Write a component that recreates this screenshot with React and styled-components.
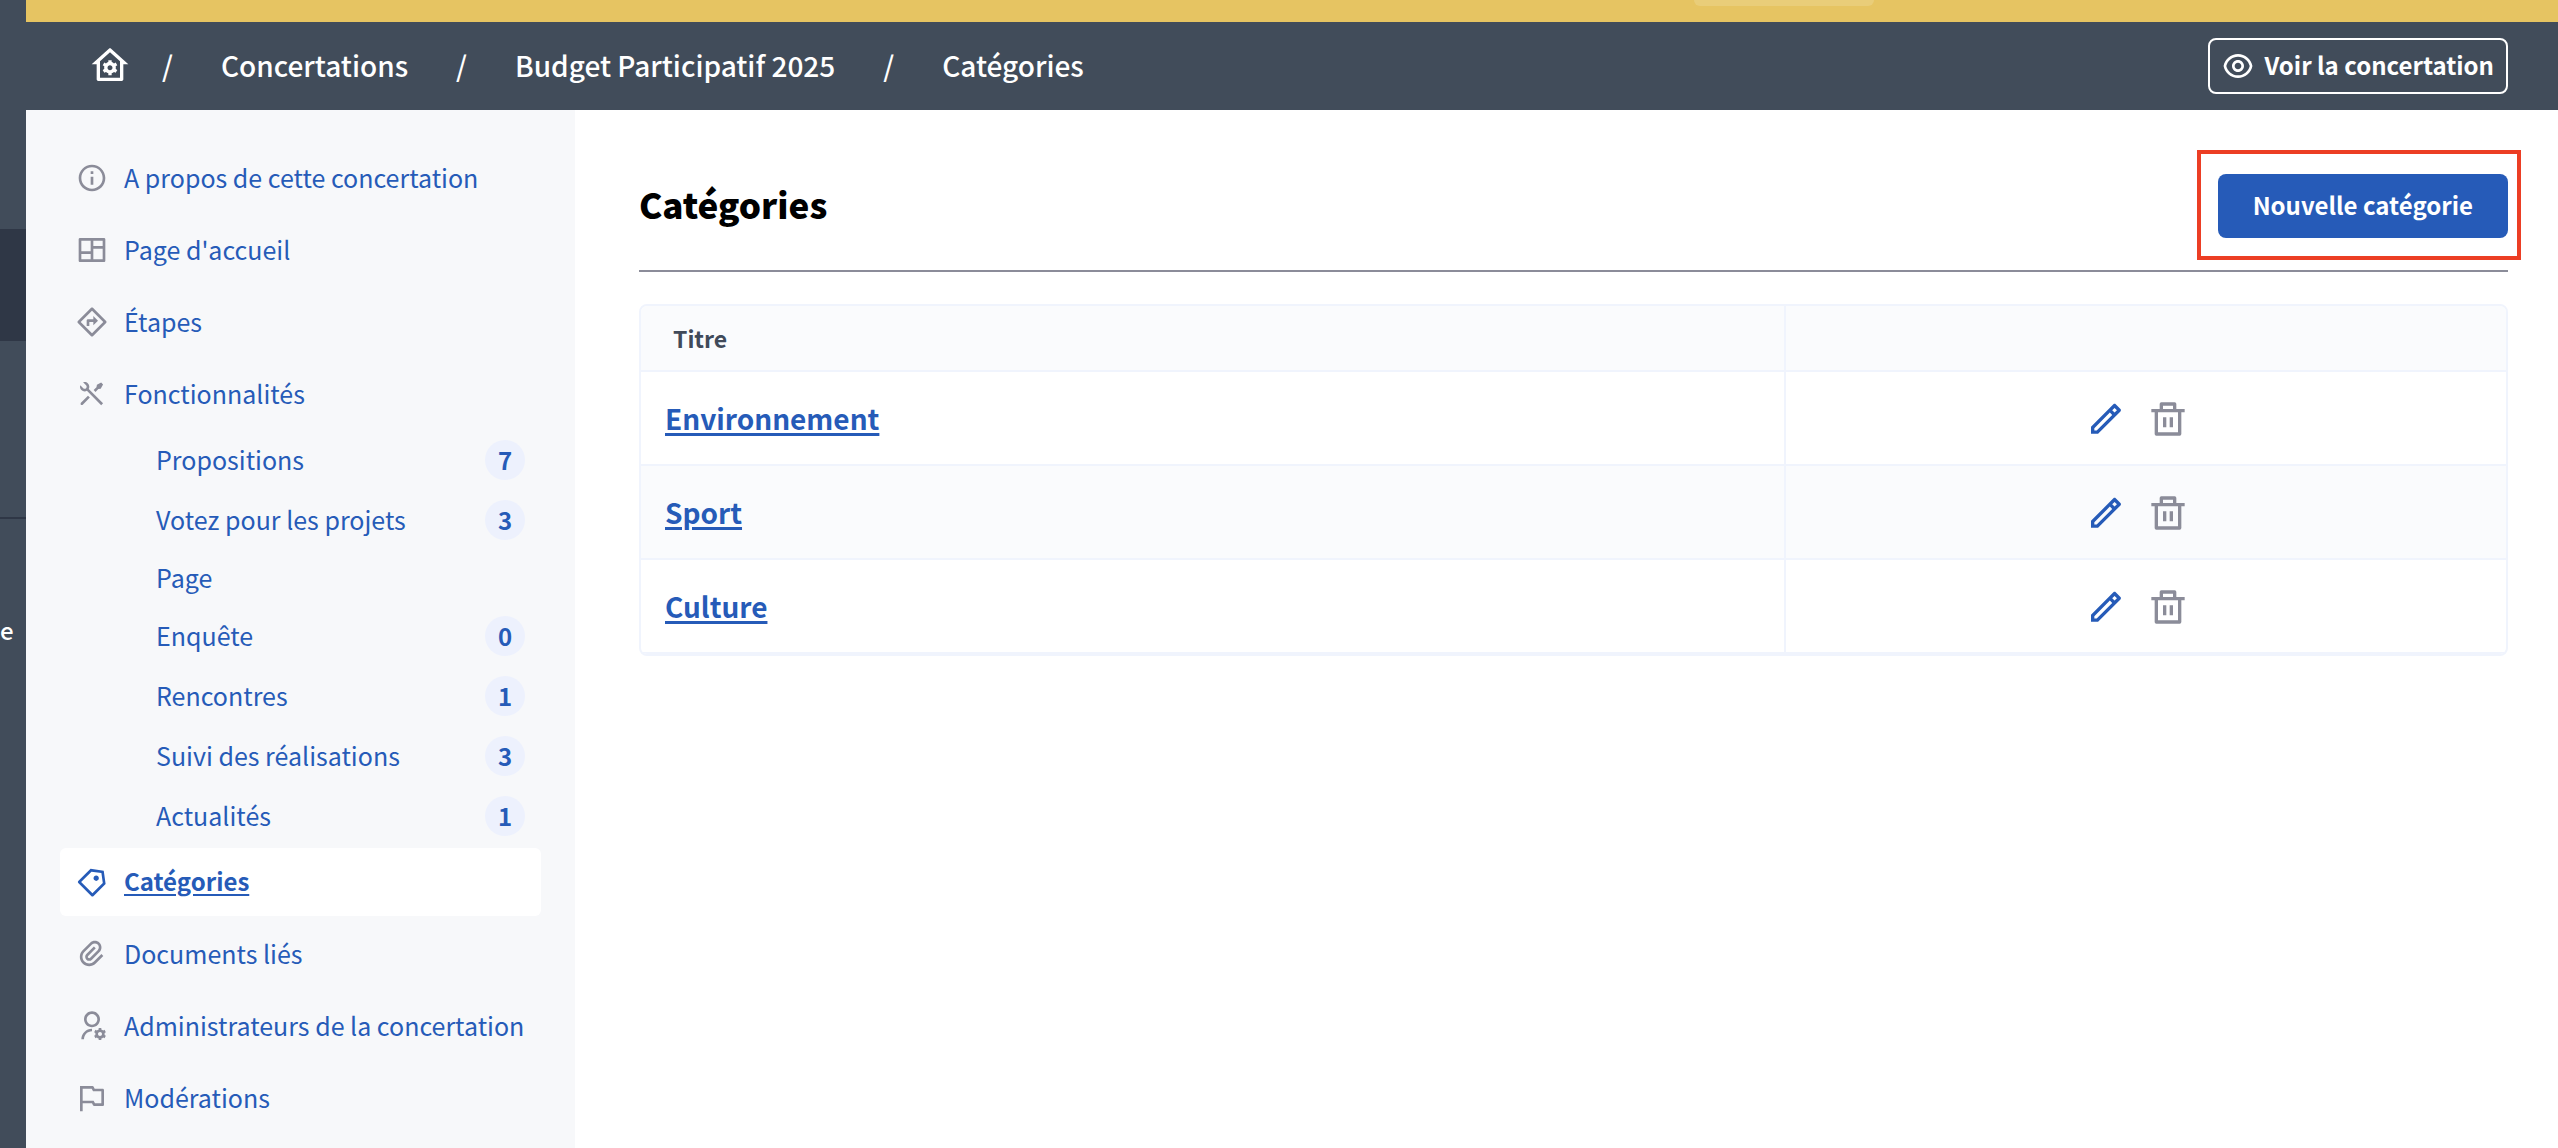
import React from "react";
import styled, { createGlobalStyle } from "styled-components";
import {
  RiHomeGearLine,
  RiEyeLine,
  RiInformationLine,
  RiLayoutMasonryLine,
  RiDirectionLine,
  RiToolsLine,
  RiPriceTag3Line,
  RiAttachment2,
  RiUserSettingsLine,
  RiFlagLine,
  RiPencilLine,
} from "react-icons/ri";

const color = {
  slate: "#414c5a",
  slateDark: "#2f3746",
  blue: "#265bb8",
  grey: "#8b8c99",
  side: "#f7f8fa",
  line: "#f0f4fd",
  stripe: "#fafbfd",
  badge: "#edf1fd",
};

const GlobalStyle = createGlobalStyle`
  *, *::before, *::after { box-sizing: border-box; }
  body {
    margin: 0;
    background: #fff;
    color: #000;
    font-family: "Noto Sans CJK SC", "Noto Sans", sans-serif;
    font-size: 25px;
    line-height: 36px;
  }
  a { color: inherit; text-decoration: none; }
  ul, ol { list-style: none; margin: 0; padding: 0; }
  h1 { margin: 0; }
`;

const Page = styled.div`
  display: flex;
  height: 100vh;
  overflow: hidden;
`;

const Rail = styled.nav`
  display: flex;
  flex-direction: column;
  flex: 0 0 26px;
  background: ${color.slate};
  color: #fff;
  overflow: hidden;
`;

const RailCurrent = styled.div`
  height: 112px;
  margin-top: 229px;
  background: ${color.slateDark};
`;

const RailSection = styled.div`
  margin-top: 176px;
  padding-top: 94px;
  border-top: 2px solid ${color.slateDark};
  font-size: 24px;
  font-weight: 500;
  line-height: 34px;
`;

const Column = styled.div`
  display: flex;
  flex-direction: column;
  flex: 1;
  min-width: 0;
`;

const Banner = styled.div`
  display: flex;
  justify-content: flex-end;
  height: 22px;
  padding-right: 684px;
  background: #e6c462;
`;

const BannerChip = styled.div`
  width: 180px;
  height: 6px;
  border-radius: 0 0 8px 8px;
  background: #e9cd79;
`;

const Header = styled.header`
  display: flex;
  align-items: center;
  justify-content: space-between;
  height: 88px;
  padding: 0 50px 0 64px;
  background: ${color.slate};
  color: #fff;
`;

/* The font sits low in its line box; the padding centres it by eye. */
const Label = styled.span`
  display: block;
  padding-bottom: 2px;
`;

const Crumbs = styled.ol`
  display: flex;
  align-items: center;
  font-size: 28px;
  font-weight: 500;
`;

const Crumb = styled.li`
  display: flex;
  align-items: center;

  & + &::before {
    content: "/";
    margin: 0 48px;
    padding-bottom: 2px;
  }
  &:nth-child(2)::before { margin-left: 32px; }
  svg { display: block; }
`;

const ViewLink = styled.a`
  display: flex;
  align-items: center;
  gap: 10px;
  height: 56px;
  padding: 0 12px;
  border: 2px solid #fff;
  border-radius: 8px;
  font-size: 24px;
  font-weight: 700;
`;

const Body = styled.div`
  display: flex;
  flex: 1;
  min-height: 0;
`;

const Sidebar = styled.aside`
  flex: 0 0 549px;
  padding: 34px;
  background: ${color.side};
  color: ${color.blue};
`;

const Menu = styled.ul`
  display: flex;
  flex-direction: column;
  gap: 4px;
`;

const MenuLink = styled.a`
  display: flex;
  align-items: center;
  gap: 16px;
  height: 68px;
  padding: 0 16px;
  border-radius: 6px;
  white-space: nowrap;
  background: ${(p) => (p.$active ? "#fff" : "transparent")};
  font-size: ${(p) => (p.$active ? "24px" : "25px")};
  font-weight: ${(p) => (p.$active ? 700 : 400)};
  text-decoration: ${(p) => (p.$active ? "underline" : "none")};
  text-decoration-thickness: 2px;
  text-underline-offset: 3px;

  svg {
    flex: none;
    color: ${(p) => (p.$active ? color.blue : color.grey)};
  }
`;

const SubMenu = styled.ul`
  display: flex;
  flex-direction: column;
  gap: 20px;
  padding: 12px 16px 8px 96px;
`;

const SubLink = styled.a`
  display: flex;
  align-items: center;
  justify-content: space-between;
  min-height: 36px;
  line-height: 34px;
`;

const Badge = styled.span`
  width: 40px;
  border-radius: 20px;
  background: ${color.badge};
  font-size: 24px;
  font-weight: 700;
  line-height: 40px;
  text-align: center;
`;

const Main = styled.main`
  flex: 1;
  min-width: 0;
  padding: 40px 50px 0 64px;
`;

const TitleBar = styled.div`
  display: flex;
  align-items: center;
  justify-content: space-between;
  height: 122px;
  padding-bottom: 10px;
  border-bottom: 2px solid ${color.grey};
`;

const Title = styled.h1`
  padding-bottom: 2px;
  font-size: 35px;
  font-weight: 900;
  line-height: 50px;
`;

const Highlight = styled.div`
  padding: 20px 9px 18px 17px;
  margin-right: -13px;
  border: 4px solid #ec3e24;
`;

const NewButton = styled.button`
  display: block;
  height: 64px;
  padding: 0 35px;
  border: 0;
  border-radius: 8px;
  background: ${color.blue};
  color: #fff;
  font: inherit;
  font-size: 24px;
  font-weight: 700;
`;

const Frame = styled.div`
  margin-top: 32px;
  border: 2px solid ${color.line};
  border-radius: 8px;
  overflow: hidden;
`;

const Table = styled.table`
  width: 100%;
  border-collapse: separate;
  border-spacing: 0;

  th, td {
    padding: 0;
    border-bottom: 2px solid ${color.line};
    text-align: left;
  }
  thead td, th { height: 66px; }
  tbody td { height: 94px; }
  td + td, th + td { border-left: 2px solid ${color.line}; }
  thead, tbody tr:nth-child(even) { background: ${color.stripe}; }
`;

const HeadCell = styled.th`
  && { padding-left: 32px; }
  width: 1143px;
  color: #404a5a;
  font-size: 23px;
  font-weight: 700;
`;

const CategoryLink = styled.a`
  margin-left: 24px;
  color: ${color.blue};
  font-size: 28px;
  font-weight: 700;
  text-decoration: underline;
  text-decoration-thickness: 3px;
  text-underline-offset: 3px;
`;

const Actions = styled.div`
  display: flex;
  justify-content: center;
  gap: 22px;
  padding: 2px 18px 0 0;
`;

const Action = styled.button`
  padding: 0;
  border: 0;
  background: none;
  color: ${(p) => (p.$muted ? color.grey : color.blue)};
  svg { display: block; }
`;

const BinIcon = ({ size }) => (
  <svg width={size} height={size} viewBox="0 0 24 24" fill="currentColor" aria-hidden="true">
    <path d="M17 6h5v2h-2v13a1 1 0 0 1-1 1H5a1 1 0 0 1-1-1V8H2V6h5V3a1 1 0 0 1 1-1h8a1 1 0 0 1 1 1v3Zm1 2H6v12h12V8Zm-9 3h2v6H9v-6Zm4 0h2v6h-2v-6ZM9 4v2h6V4H9Z" />
  </svg>
);

const features = [
  ["Propositions", 7],
  ["Votez pour les projets", 3],
  ["Page", null],
  ["Enquête", 0],
  ["Rencontres", 1],
  ["Suivi des réalisations", 3],
  ["Actualités", 1],
];

const menu = [
  { label: "A propos de cette concertation", icon: RiInformationLine },
  { label: "Page d'accueil", icon: RiLayoutMasonryLine },
  { label: "Étapes", icon: RiDirectionLine },
  { label: "Fonctionnalités", icon: RiToolsLine, items: features },
  { label: "Catégories", icon: RiPriceTag3Line, active: true },
  { label: "Documents liés", icon: RiAttachment2 },
  { label: "Administrateurs de la concertation", icon: RiUserSettingsLine },
  { label: "Modérations", icon: RiFlagLine },
];

const categories = ["Environnement", "Sport", "Culture"];

export default function App() {
  return (
    <Page>
      <GlobalStyle />
      <Rail>
        <RailCurrent />
        <RailSection>e</RailSection>
      </Rail>
      <Column>
        <Banner>
          <BannerChip />
        </Banner>
        <Header>
          <Crumbs>
            <Crumb>
              <a href="#accueil" aria-label="Accueil"><RiHomeGearLine size={40} /></a>
            </Crumb>
            <Crumb><a href="#concertations"><Label>Concertations</Label></a></Crumb>
            <Crumb><a href="#budget"><Label>Budget Participatif 2025</Label></a></Crumb>
            <Crumb><a href="#categories"><Label>Catégories</Label></a></Crumb>
          </Crumbs>
          <ViewLink href="#voir">
            <RiEyeLine size={32} />
            <Label>Voir la concertation</Label>
          </ViewLink>
        </Header>
        <Body>
          <Sidebar>
            <Menu>
              {menu.map(({ label, icon: Icon, items, active }) => (
                <li key={label}>
                  <MenuLink href="#menu" $active={active}>
                    <Icon size={32} />
                    <Label>{label}</Label>
                  </MenuLink>
                  {items && (
                    <SubMenu>
                      {items.map(([name, count]) => (
                        <li key={name}>
                          <SubLink href="#fonctionnalite">
                            <Label>{name}</Label>
                            {count !== null && <Badge>{count}</Badge>}
                          </SubLink>
                        </li>
                      ))}
                    </SubMenu>
                  )}
                </li>
              ))}
            </Menu>
          </Sidebar>
          <Main>
            <TitleBar>
              <Title>Catégories</Title>
              <Highlight>
                <NewButton type="button"><Label>Nouvelle catégorie</Label></NewButton>
              </Highlight>
            </TitleBar>
            <Frame>
              <Table>
                <thead>
                  <tr>
                    <HeadCell scope="col">Titre</HeadCell>
                    <td />
                  </tr>
                </thead>
                <tbody>
                  {categories.map((name) => (
                    <tr key={name}>
                      <td><CategoryLink href="#categorie">{name}</CategoryLink></td>
                      <td>
                        <Actions>
                          <Action type="button" aria-label="Modifier"><RiPencilLine size={40} /></Action>
                          <Action type="button" aria-label="Supprimer" $muted><BinIcon size={40} /></Action>
                        </Actions>
                      </td>
                    </tr>
                  ))}
                </tbody>
              </Table>
            </Frame>
          </Main>
        </Body>
      </Column>
    </Page>
  );
}
